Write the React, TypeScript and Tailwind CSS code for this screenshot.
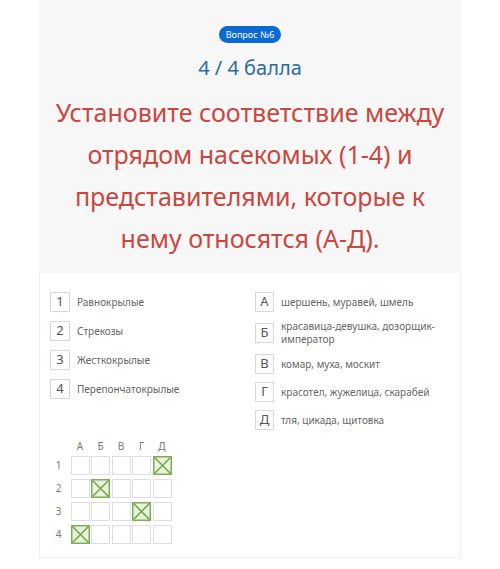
import React from 'react';

const orders = ['Равнокрылые', 'Стрекозы', 'Жесткокрылые', 'Перепончатокрылые'];

const examples: [string, string][] = [
  ['А', 'шершень, муравей, шмель'],
  ['Б', 'красавица-девушка, дозорщик-\nимператор'],
  ['В', 'комар, муха, москит'],
  ['Г', 'красотел, жужелица, скарабей'],
  ['Д', 'тля, цикада, щитовка'],
];

const letters = ['А', 'Б', 'В', 'Г', 'Д'];
// answer column index for each row
const answers = [4, 1, 3, 0];

const Cross = () => (
  <svg width="19" height="19" viewBox="0 0 19 19" className="block">
    <rect x="0.75" y="0.75" width="17.5" height="17.5" fill="#e9f3dc" stroke="#7cae58" strokeWidth="1.5" />
    <path d="M1.5 1.5 L17.5 17.5 M17.5 1.5 L1.5 17.5" stroke="#6fa64b" strokeWidth="1.5" />
  </svg>
);

const App: React.FC = () => {
  return (
    <div className="w-full h-[569px] bg-white flex justify-center" style={{ fontFamily: '"Noto Sans", sans-serif' }}>
      <div className="w-[422px] flex flex-col">
        <div className="h-[273px] bg-[#f7f7f7] flex flex-col items-center pt-[26px]">
          <div className="h-[17px] px-[7px] rounded-full bg-[#0b6bd1] text-white text-[9px] leading-[17px]">
            Вопрос №6
          </div>
          <div className="mt-[12px] text-[20px] leading-[26px] text-[#2d6c9f]">4 / 4 балла</div>
          <div className="mt-[10px] text-[25px] leading-[42px] text-[#c9473f] text-center">
            Установите соответствие между
            <br />
            отрядом насекомых (1-4) и
            <br />
            представителями, которые к
            <br />
            нему относятся (А-Д).
          </div>
        </div>
        <div className="h-[285px] border border-t-0 border-[#f0f0f0] px-[10px] pt-[19px] flex">
          <div className="w-[205px] flex flex-col">
            <div className="flex flex-col gap-[9px]">
              {orders.map((o, i) => (
                <div key={o} className="flex items-center">
                  <div className="w-[20px] h-[20px] border border-[#d8d8d8] flex items-center justify-center text-[13px] text-[#555]">
                    {i + 1}
                  </div>
                  <span className="ml-[7px] text-[10px] text-[#666]">{o}</span>
                </div>
              ))}
            </div>
            <div className="mt-[41px] grid grid-cols-[19px_repeat(5,19px)] gap-x-[1.5px] gap-y-[4px] text-[10px] text-[#777]">
              <div />
              {letters.map((l) => (
                <div key={l} className="h-[12px] leading-[12px] text-center">{l}</div>
              ))}
              {answers.map((a, r) => (
                <React.Fragment key={r}>
                  <div className="h-[19px] leading-[19px] text-center pr-[2px]">{r + 1}</div>
                  {letters.map((l, c) =>
                    c === a ? (
                      <Cross key={l} />
                    ) : (
                      <div key={l} className="w-[19px] h-[19px] border border-[#dedede]" />
                    )
                  )}
                </React.Fragment>
              ))}
            </div>
          </div>
          <div className="flex flex-col gap-[8px]">
            {examples.map(([l, t]) => (
              <div key={l} className="flex items-center">
                <div className="w-[19px] h-[20px] border border-[#d8d8d8] flex items-center justify-center text-[13px] text-[#555]">
                  {l}
                </div>
                <span className="ml-[7px] text-[10px] leading-[13px] text-[#666] whitespace-pre-line">{t}</span>
              </div>
            ))}
          </div>
        </div>
      </div>
    </div>
  );
};

export default App;
